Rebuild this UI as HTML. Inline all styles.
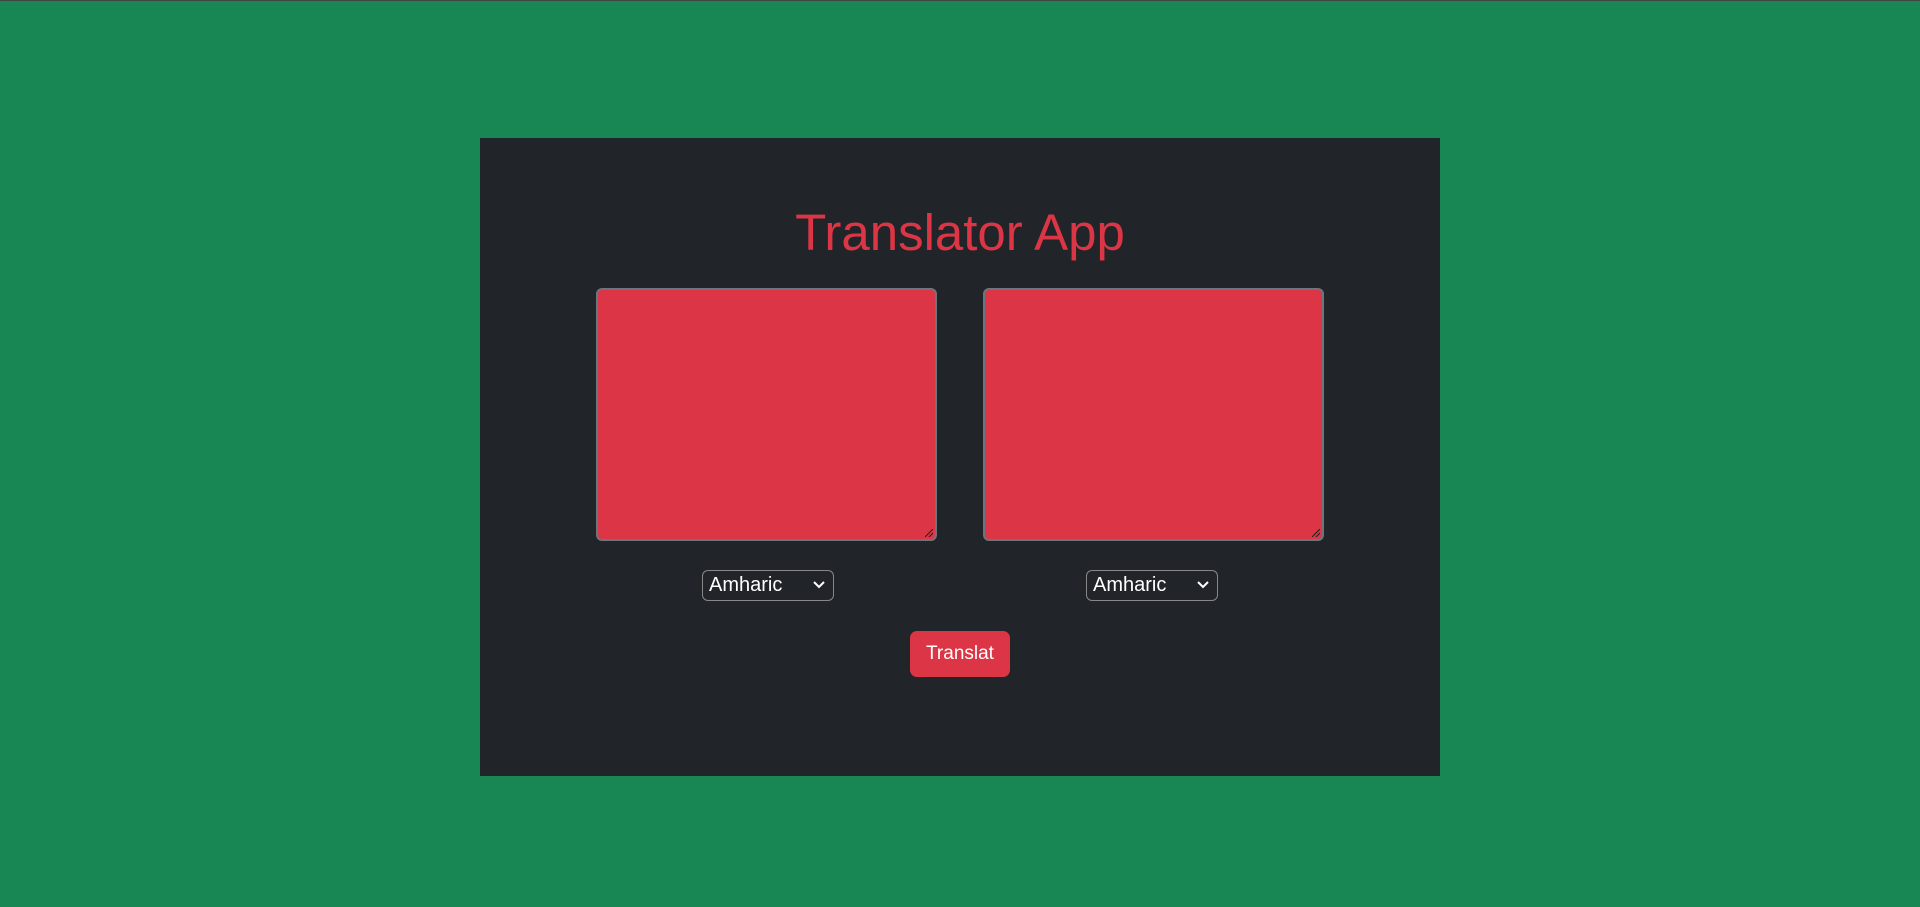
<!DOCTYPE html>
<html><head><meta charset="utf-8"><style>
*{box-sizing:border-box;margin:0;padding:0}
html,body{width:1920px;height:907px;overflow:hidden}
body{background:#198754;font-family:"Liberation Sans",sans-serif;position:relative;border-top:1px solid #444}
.panel{position:absolute;left:480px;top:137px;width:960px;height:638px;background:#212529}
h1{position:absolute;left:0;width:1920px;top:202px;text-align:center;color:#dc3545;font-weight:400;font-size:51px;line-height:60px}
.ta{position:absolute;top:287px;width:341px;height:253px;background:#dc3545;border:2px solid #6c757d;border-radius:6px}
.ta:after{content:"";position:absolute;right:2px;bottom:2px;width:8px;height:8px;background:linear-gradient(135deg,transparent 45%,#222 45%,#222 55%,transparent 55%,transparent 70%,#222 70%,#222 80%,transparent 80%)}
.sel{position:absolute;top:569px;width:132px;height:31px;border:1px solid #888;border-radius:6px;color:#fff;font-size:20px;line-height:29px;padding-left:6px}
.sel svg{position:absolute;right:8px;top:10px}
.btn{position:absolute;left:910px;top:630px;width:100px;height:46px;background:#dc3545;border-radius:7px;color:#fff;font-size:19px;line-height:46px;text-align:center}
</style></head><body>
<div class="panel"></div>
<h1>Translator App</h1>
<div class="ta" style="left:596px"></div>
<div class="ta" style="left:983px"></div>
<div class="sel" style="left:702px">Amharic<svg width="12" height="8" viewBox="0 0 12 8"><path d="M1 1l5 5 5-5" fill="none" stroke="#fff" stroke-width="2"/></svg></div>
<div class="sel" style="left:1086px">Amharic<svg width="12" height="8" viewBox="0 0 12 8"><path d="M1 1l5 5 5-5" fill="none" stroke="#fff" stroke-width="2"/></svg></div>
<div class="btn">Translat</div>
</body></html>
